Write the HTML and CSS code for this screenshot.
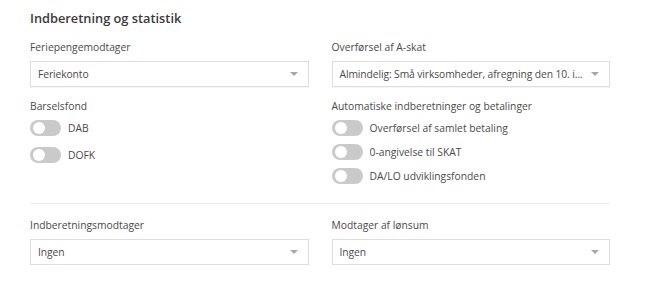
FILE: index.html
```html
<!DOCTYPE html>
<html lang="da">
<head>
    <meta charset="UTF-8">
    <title>Indberetning og statistik</title>
    <link rel="stylesheet" href="styles.css">
</head>
<body>
    <div class="panel">
        <h3 class="panel-title">Indberetning og statistik</h3>

        <div class="row">
            <div class="field">
                <label class="field-label">Feriepengemodtager</label>
                <div class="select">
                    <span class="select-value">Feriekonto</span>
                    <span class="select-arrow"></span>
                </div>
            </div>
            <div class="field">
                <label class="field-label">Overførsel af A-skat</label>
                <div class="select">
                    <span class="select-value">Almindelig: Små virksomheder, afregning den 10. i...</span>
                    <span class="select-arrow"></span>
                </div>
            </div>
        </div>

        <div class="row switches">
            <div class="field">
                <label class="field-label">Barselsfond</label>
                <div class="switch-list loose">
                    <div class="switch-item"><span class="toggle"></span>DAB</div>
                    <div class="switch-item"><span class="toggle"></span>DOFK</div>
                </div>
            </div>
            <div class="field">
                <label class="field-label">Automatiske indberetninger og betalinger</label>
                <div class="switch-list">
                    <div class="switch-item"><span class="toggle"></span>Overførsel af samlet betaling</div>
                    <div class="switch-item"><span class="toggle"></span>0-angivelse til SKAT</div>
                    <div class="switch-item"><span class="toggle"></span>DA/LO udviklingsfonden</div>
                </div>
            </div>
        </div>

        <hr class="divider">

        <div class="row">
            <div class="field">
                <label class="field-label">Indberetningsmodtager</label>
                <div class="select">
                    <span class="select-value">Ingen</span>
                    <span class="select-arrow"></span>
                </div>
            </div>
            <div class="field">
                <label class="field-label">Modtager af lønsum</label>
                <div class="select">
                    <span class="select-value">Ingen</span>
                    <span class="select-arrow"></span>
                </div>
            </div>
        </div>
    </div>
</body>
</html>
```

FILE: styles.css
```css
/* General */
body {
    margin: 0;
    background: #fff;
    font-family: "Open Sans", Arial, sans-serif;
    color: #444;
}

.panel {
    width: 580px;
    padding: 9px 0 0 30px;
}

.panel-title {
    margin: 0 0 12px 0;
    font-size: 12.8px;
    font-weight: 600;
    line-height: 18px;
    color: #3a3a3a;
}

/* Two column rows */
.row {
    display: grid;
    grid-template-columns: minmax(0, 1fr) minmax(0, 1fr);
    column-gap: 23px;
}

.field-label {
    display: block;
    font-size: 10.3px;
    line-height: 16px;
    color: #4a4a4a;
    margin-bottom: 6px;
}

/* Select boxes */
.select {
    display: flex;
    align-items: center;
    height: 24px;
    padding: 0 10px 0 7px;
    border: 1px solid #dedede;
    box-shadow: 0 1px 1px rgba(0, 0, 0, 0.04);
    font-size: 10.3px;
    color: #4a4a4a;
}

.select-value {
    flex: 1;
    white-space: nowrap;
    letter-spacing: -0.1px;
}

.select-arrow {
    margin-left: 4px;
    width: 0;
    height: 0;
    border-left: 4px solid transparent;
    border-right: 4px solid transparent;
    border-top: 4px solid #a8a8a8;
}

/* Switches */
.switches {
    margin-top: 11px;
}

.switches .field-label {
    margin-bottom: 5px;
}

.switch-list {
    display: flex;
    flex-direction: column;
    gap: 7px;
}

.switch-list.loose {
    gap: 10px;
}

.switch-item {
    display: flex;
    align-items: center;
    gap: 7px;
    font-size: 10.3px;
    color: #4a4a4a;
    height: 17px;
}

.toggle {
    position: relative;
    width: 31px;
    height: 16px;
    border-radius: 8px;
    background: #cacaca;
    flex: 0 0 auto;
}

.toggle::after {
    content: "";
    position: absolute;
    left: 3px;
    top: 2px;
    width: 12px;
    height: 12px;
    border-radius: 50%;
    background: #fff;
}

.divider {
    margin: 19px 0 13px 0;
    border: 0;
    border-top: 1px solid #ececec;
}
```
